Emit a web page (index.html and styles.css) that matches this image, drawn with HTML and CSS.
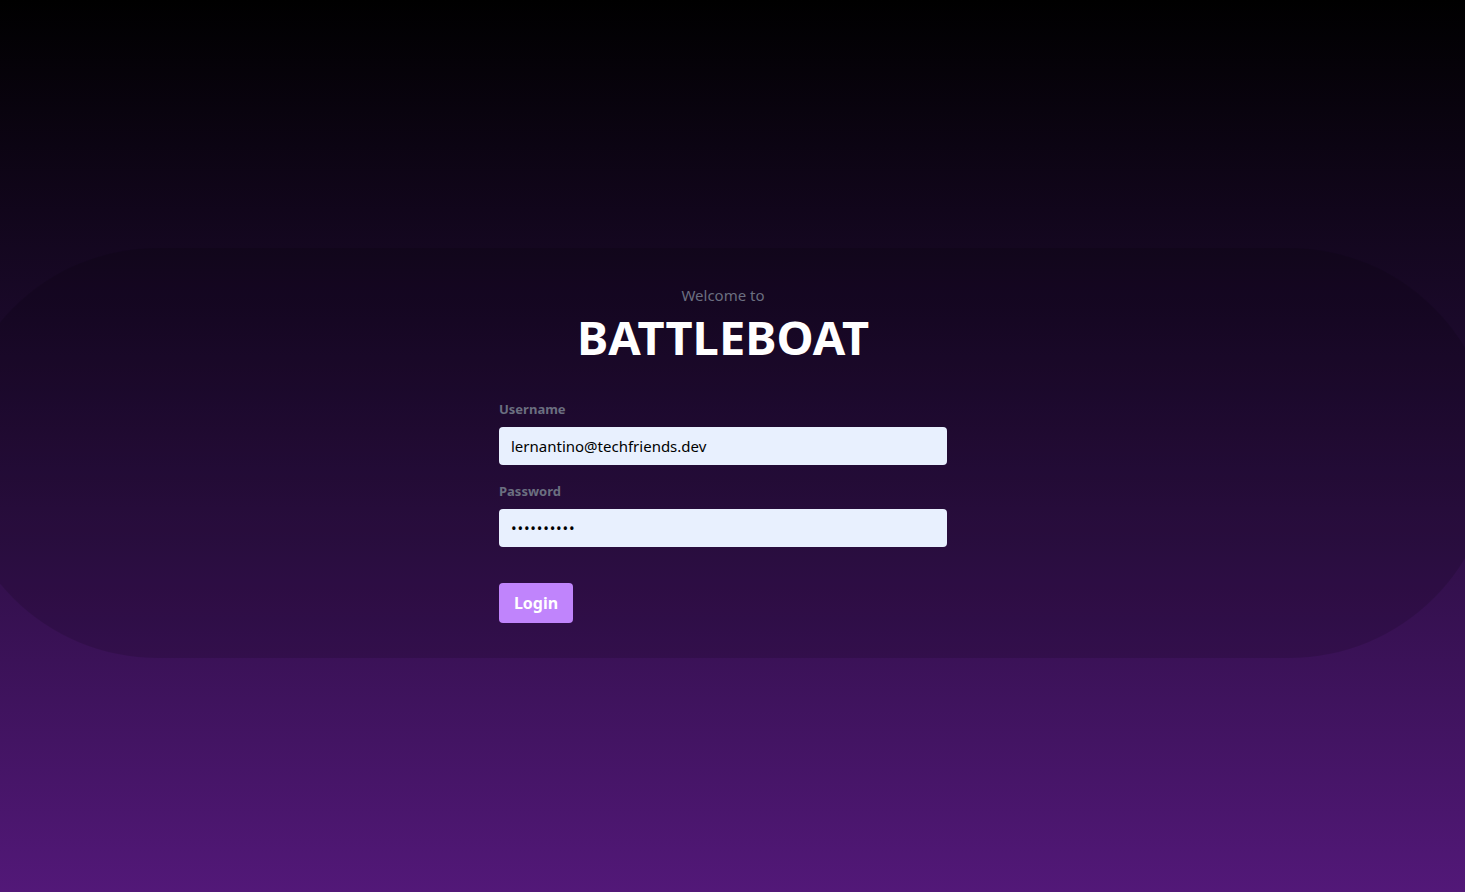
FILE: index.html
```html
<!DOCTYPE html>
<html lang="en">
<head>
<meta charset="utf-8">
<title>Battleboat</title>
<link rel="stylesheet" href="styles.css">
</head>
<body>
<main class="page">
  <section class="card">
    <p class="welcome">Welcome to</p>
    <h1 class="title">BATTLEBOAT</h1>
    <form class="form">
      <label class="label" for="username">Username</label>
      <input class="input" id="username" type="text" value="lernantino@techfriends.dev">
      <label class="label label-second" for="password">Password</label>
      <input class="input input-pass" id="password" type="password" value="0123456789">
      <button class="btn" type="button">Login</button>
    </form>
  </section>
</main>
</body>
</html>
```
FILE: styles.css
```css
* { box-sizing: border-box; }
html, body { margin: 0; height: 100%; }
body {
  background: linear-gradient(to bottom, #000000 0%, #1d0a2e 40%, #521878 100%);
  font-family: "Noto Sans", "Open Sans", sans-serif;
  overflow: hidden;
}
.page {
  width: 1446px;
  height: 892px;
  display: flex;
  justify-content: center;
  padding-top: 248px;
}
.card {
  flex: none;
  width: 1541px;
  height: 410px;
  border-radius: 205px;
  background: rgba(0, 0, 0, 0.13);
  display: flex;
  flex-direction: column;
  align-items: center;
  padding-top: 35px;
}
.welcome {
  margin: 0;
  color: #6b6f80;
  font-size: 15px;
  line-height: 24px;
}
.title {
  margin: 0;
  color: #ffffff;
  font-size: 47px;
  line-height: 60px;
  font-weight: 700;
}
.form {
  width: 448px;
  display: flex;
  flex-direction: column;
  align-items: flex-start;
  margin-top: 32px;
}
.label {
  color: #6b6f80;
  font-size: 13px;
  font-weight: 700;
  line-height: 20px;
  margin-bottom: 8px;
}
.label-second { margin-top: 16px; }
.input {
  width: 448px;
  height: 38px;
  border: none;
  border-radius: 4px;
  background: #e8f0fe;
  color: #000;
  padding: 0 12px;
  font-family: inherit;
  font-size: 15px;
  outline: none;
}
.input-pass { letter-spacing: 0.8px; }
.btn {
  margin-top: 36px;
  width: 74px;
  height: 40px;
  border: none;
  border-radius: 4px;
  background: #c084fc;
  color: #fff;
  font-family: inherit;
  font-size: 16px;
  font-weight: 700;
  cursor: pointer;
}
```
